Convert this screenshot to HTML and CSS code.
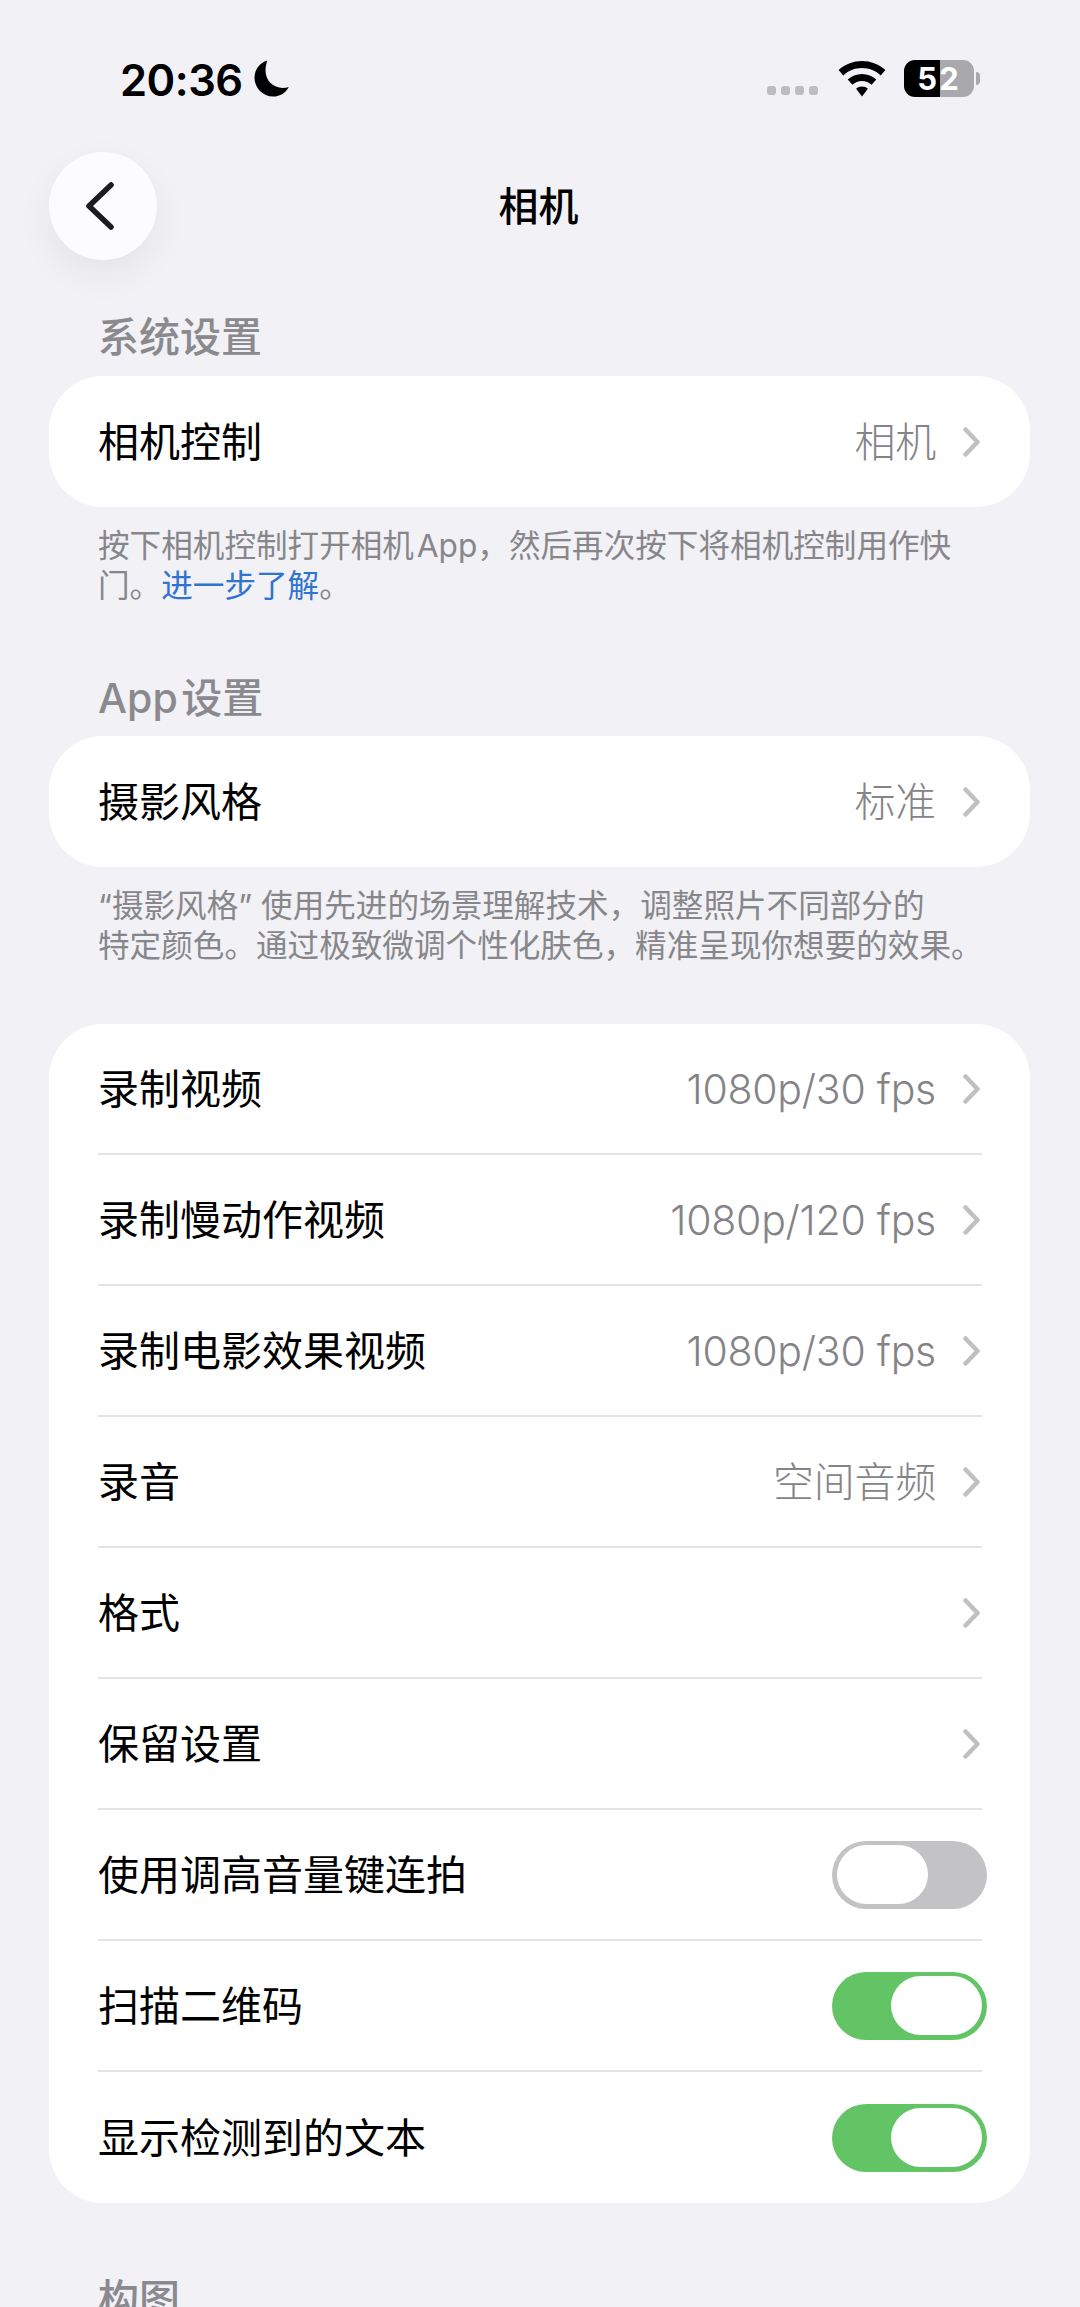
FILE: index.html
```html
<!DOCTYPE html>
<html lang="zh-CN">
<head>
    <meta charset="UTF-8">
    <meta name="viewport" content="width=device-width, initial-scale=1.0">
    <title>相机</title>
    <link rel="stylesheet" href="styles.css">
</head>
<body>
    <!-- Status bar -->
    <header class="status-bar">
        <div class="status-left">
            <span class="clock">20:36</span>
            <svg class="moon" viewBox="0 0 34 36" aria-hidden="true">
                <path d="M13 0.5C5.6 2.6 0.5 9.2 0.5 17.2C0.5 27.3 8.6 35.5 18.6 35.5C25.4 35.5 31 31.8 33.8 26.2C32 26.9 30 27.2 27.9 27.2C18.6 27.2 11.2 19.8 11.2 10.5C11.2 7 11.8 3.5 13 0.5Z"/>
            </svg>
        </div>
        <div class="status-right">
            <div class="signal-dots"><span></span><span></span><span></span><span></span></div>
            <svg class="wifi" viewBox="0 0 48 36" aria-hidden="true">
                <path d="M24 0C15 0 6.7 3.4 0.6 9.1L5.3 14.4C10.2 9.9 16.8 7.1 24 7.1C31.2 7.1 37.8 9.9 42.7 14.4L47.4 9.1C41.3 3.4 33 0 24 0Z"/>
                <path d="M24 13C18.5 13 13.5 15.1 9.7 18.5L14.4 23.8C17 21.5 20.3 20.1 24 20.1C27.7 20.1 31 21.5 33.6 23.8L38.3 18.5C34.5 15.1 29.5 13 24 13Z"/>
                <path d="M24 25.5C21.7 25.5 19.7 26.3 18.1 27.7L24 35.6L29.9 27.7C28.3 26.3 26.3 25.5 24 25.5Z"/>
            </svg>
            <div class="battery">
                <div class="battery-body">52</div>
                <div class="battery-nub"></div>
            </div>
        </div>
    </header>

    <!-- Navigation -->
    <nav class="nav-bar">
        <a class="back-btn" href="#" aria-label="返回">
            <svg class="back-icon" viewBox="0 0 30 50" aria-hidden="true">
                <path d="M26 4L4 25L26 46"/>
            </svg>
        </a>
        <h1 class="nav-title">相机</h1>
    </nav>

    <main class="content">
        <!-- System settings -->
        <h2 class="group-title">系统设置</h2>
        <section class="card">
            <a class="row" href="#">
                <span class="row-label">相机控制</span>
                <span class="row-value">相机</span>
                <svg class="chevron" viewBox="0 0 17 30" aria-hidden="true"><path d="M2.5 2.5L14.5 15L2.5 27.5"/></svg>
            </a>
        </section>
        <p class="group-note">按下相机控制打开相机&#8202;App，然后再次按下将相机控制用作快门。<a class="note-link" href="#">进一步了解</a>。</p>

        <!-- App settings -->
        <h2 class="group-title group-title-spaced">App&#8202;设置</h2>
        <section class="card">
            <a class="row" href="#">
                <span class="row-label">摄影风格</span>
                <span class="row-value">标准</span>
                <svg class="chevron" viewBox="0 0 17 30" aria-hidden="true"><path d="M2.5 2.5L14.5 15L2.5 27.5"/></svg>
            </a>
        </section>
        <p class="group-note">“摄影风格” 使用先进的场景理解技术，调整照片不同部分的<br>特定颜色。通过极致微调个性化肤色，精准呈现你想要的效果。</p>

        <!-- Capture options -->
        <section class="card card-list">
            <a class="row" href="#">
                <span class="row-label">录制视频</span>
                <span class="row-value">1080p/30 fps</span>
                <svg class="chevron" viewBox="0 0 17 30" aria-hidden="true"><path d="M2.5 2.5L14.5 15L2.5 27.5"/></svg>
            </a>
            <a class="row" href="#">
                <span class="row-label">录制慢动作视频</span>
                <span class="row-value">1080p/120 fps</span>
                <svg class="chevron" viewBox="0 0 17 30" aria-hidden="true"><path d="M2.5 2.5L14.5 15L2.5 27.5"/></svg>
            </a>
            <a class="row" href="#">
                <span class="row-label">录制电影效果视频</span>
                <span class="row-value">1080p/30 fps</span>
                <svg class="chevron" viewBox="0 0 17 30" aria-hidden="true"><path d="M2.5 2.5L14.5 15L2.5 27.5"/></svg>
            </a>
            <a class="row" href="#">
                <span class="row-label">录音</span>
                <span class="row-value">空间音频</span>
                <svg class="chevron" viewBox="0 0 17 30" aria-hidden="true"><path d="M2.5 2.5L14.5 15L2.5 27.5"/></svg>
            </a>
            <a class="row" href="#">
                <span class="row-label">格式</span>
                <svg class="chevron" viewBox="0 0 17 30" aria-hidden="true"><path d="M2.5 2.5L14.5 15L2.5 27.5"/></svg>
            </a>
            <a class="row" href="#">
                <span class="row-label">保留设置</span>
                <svg class="chevron" viewBox="0 0 17 30" aria-hidden="true"><path d="M2.5 2.5L14.5 15L2.5 27.5"/></svg>
            </a>
            <div class="row">
                <span class="row-label">使用调高音量键连拍</span>
                <span class="toggle"><span class="toggle-thumb"></span></span>
            </div>
            <div class="row">
                <span class="row-label">扫描二维码</span>
                <span class="toggle toggle-on"><span class="toggle-thumb"></span></span>
            </div>
            <div class="row">
                <span class="row-label">显示检测到的文本</span>
                <span class="toggle toggle-on"><span class="toggle-thumb"></span></span>
            </div>
        </section>

        <h2 class="group-title group-title-last">构图</h2>
    </main>
</body>
</html>
```

FILE: styles.css
```css
/* Base */
* {
    box-sizing: border-box;
}

html,
body {
    height: 2307px;
    overflow: hidden;
}

body {
    margin: 0;
    font-family: "Inter", "Noto Sans CJK SC", sans-serif;
    color: #000;
    background-color: #f1f1f6;
}

a {
    color: inherit;
    text-decoration: none;
}

/* Status bar */
.status-bar {
    display: flex;
    justify-content: space-between;
    align-items: center;
    height: 37px;
    margin: 60px 100px 55px 120px;
}

.status-left {
    display: flex;
    align-items: center;
    gap: 11px;
}

.clock {
    padding-top: 2px;
    font-size: 43.5px;
    font-weight: 600;
    line-height: 44px;
    letter-spacing: -0.5px;
}

.moon {
    width: 35px;
    height: 37px;
    fill: #000;
}

.status-right {
    display: flex;
    align-items: center;
}

.signal-dots {
    display: flex;
    gap: 5px;
    align-self: flex-end;
    margin: 0 20px 2px 0;
}

.signal-dots span {
    width: 9px;
    height: 9px;
    border-radius: 3px;
    background: #bdbdc1;
}

.wifi {
    width: 48px;
    height: 36px;
    margin-right: 18px;
    fill: #000;
}

.battery {
    display: flex;
    align-items: center;
    gap: 2px;
}

.battery-body {
    display: flex;
    justify-content: center;
    align-items: center;
    width: 70px;
    height: 37px;
    border-radius: 11px;
    font-size: 31px;
    font-weight: 700;
    letter-spacing: 2px;
    color: #fff;
    background: linear-gradient(to right, #000 52%, #a9a9ad 52%);
}

.battery-nub {
    width: 4px;
    height: 13px;
    border-radius: 0 4px 4px 0;
    background: #a9a9ad;
}

/* Navigation */
.nav-bar {
    display: grid;
    grid-template-columns: 108px 1fr 108px;
    align-items: center;
    height: 108px;
    margin: 0 50px 52px 49px;
}

.back-btn {
    display: flex;
    justify-content: center;
    align-items: center;
    width: 108px;
    height: 108px;
    border-radius: 50%;
    background: #fcfcfe;
    box-shadow: 0 14px 36px rgba(0, 0, 0, 0.06);
}

.back-icon {
    width: 30px;
    height: 50px;
    margin-right: 6px;
    fill: none;
    stroke: #1c1c1e;
    stroke-width: 5.5;
    stroke-linecap: round;
    stroke-linejoin: round;
}

.nav-title {
    margin: 0;
    padding: 2px 2px 0 0;
    font-size: 40px;
    font-weight: 500;
    line-height: 50px;
    text-align: center;
}

/* Groups */
.content {
    padding: 0 50px 0 49px;
}

.group-title {
    margin: 0 0 14px;
    padding-left: 49px;
    font-size: 41px;
    font-weight: 500;
    line-height: 50px;
    color: #8a8a8e;
}

.group-title-spaced {
    margin-top: 67px;
    margin-bottom: 13px;
}

.group-title-last {
    margin-top: 71px;
}

.group-note {
    margin: 19px 0 0;
    padding: 0 40px 0 49px;
    font-size: 31.6px;
    line-height: 40px;
    color: #87878b;
}

.note-link {
    color: #2f74d0;
}

/* Cards */
.card {
    border-radius: 54px;
    background: #fff;
}

.card-list {
    margin-top: 58px;
}

.row {
    display: flex;
    align-items: center;
    height: 131px;
    margin: 0 48px 0 49px;
    border-bottom: 2px solid #e4e4e6;
    font-size: 41px;
    line-height: 50px;
}

.row:last-child {
    border-bottom: none;
}

.row-label {
    flex: 1;
    color: #000;
}

.row-value {
    margin-right: 27px;
    font-weight: 300;
    letter-spacing: -0.25px;
    color: #848488;
}

.chevron {
    width: 17px;
    height: 30px;
    margin-right: 2px;
    fill: none;
    stroke: #c0c0c3;
    stroke-width: 4.5;
    stroke-linecap: round;
    stroke-linejoin: round;
}

/* Toggles */
.toggle {
    display: flex;
    align-items: center;
    width: 155px;
    height: 68px;
    margin-right: -5px;
    padding: 0 5px;
    border-radius: 34px;
    background: #c3c3c5;
}

.toggle-on {
    justify-content: flex-end;
    background: #63c466;
}

.toggle-thumb {
    width: 91px;
    height: 59px;
    border-radius: 30px;
    background: #fff;
}
```
